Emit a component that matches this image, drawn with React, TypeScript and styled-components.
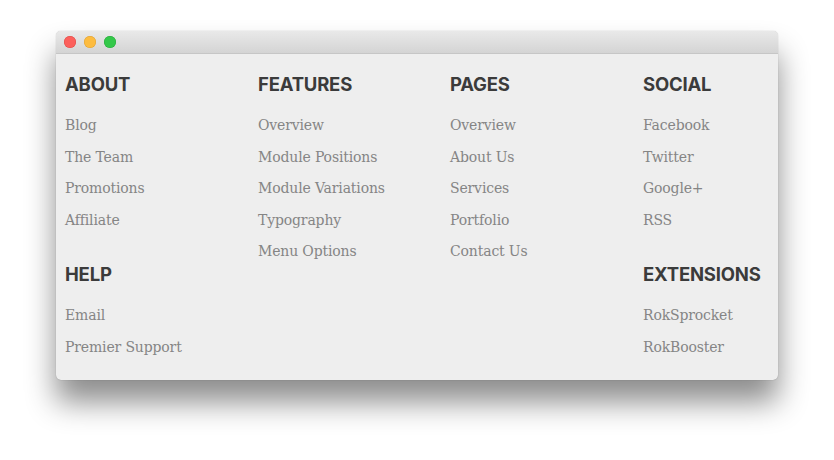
import React from 'react';
import styled, { createGlobalStyle } from 'styled-components';

const GlobalStyle = createGlobalStyle`
  html, body {
    margin: 0;
    padding: 0;
    background: #ffffff;
  }
`;

const Page = styled.div`
  width: 834px;
  height: 460px;
  padding: 31px 56px 0;
  box-sizing: border-box;
`;

const Window = styled.div`
  width: 722px;
  height: 349px;
  background-color: #eeeeee;
  border-radius: 5px;
  box-shadow: 0 22px 30px rgba(0, 0, 0, 0.45), 0 0 1px rgba(0, 0, 0, 0.35);
  overflow: hidden;
  display: flex;
  flex-direction: column;
`;

const TitleBar = styled.div`
  height: 22px;
  flex-shrink: 0;
  background: linear-gradient(#e9e9e9, #d4d4d4);
  border-bottom: 1px solid #c6c6c6;
  display: flex;
  align-items: center;
  gap: 8px;
  padding-left: 8px;
`;

const Light = styled.span<{ $color: string; $edge: string }>`
  width: 12px;
  height: 12px;
  border-radius: 50%;
  background-color: ${({ $color }) => $color};
  box-shadow: inset 0 0 0 0.5px ${({ $edge }) => $edge};
`;

const Grid = styled.div`
  display: grid;
  grid-template-columns: 193px 192px 193px 1fr;
  row-gap: 1px;
  padding: 19px 0 0 9px;
`;

const Column = styled.div`
  display: flex;
  flex-direction: column;
  align-items: flex-start;
  gap: 9.5px;
`;

const Heading = styled.h3`
  margin: 0 0 9.5px;
  font-family: Inter, "Liberation Sans", sans-serif;
  font-weight: 700;
  font-size: 18.5px;
  line-height: 22px;
  letter-spacing: -0.2px;
  color: #3b3b3b;
`;

const Link = styled.a`
  display: block;
  font-family: "DejaVu Serif", serif;
  font-size: 14px;
  line-height: 22px;
  color: #858585;
  text-decoration: none;
  letter-spacing: -0.15px;
`;

const sections = [
  { title: 'ABOUT', items: ['Blog', 'The Team', 'Promotions', 'Affiliate'] },
  {
    title: 'FEATURES',
    items: ['Overview', 'Module Positions', 'Module Variations', 'Typography', 'Menu Options'],
  },
  { title: 'PAGES', items: ['Overview', 'About Us', 'Services', 'Portfolio', 'Contact Us'] },
  { title: 'SOCIAL', items: ['Facebook', 'Twitter', 'Google+', 'RSS'] },
  { title: 'HELP', items: ['Email', 'Premier Support'] },
  null,
  null,
  { title: 'EXTENSIONS', items: ['RokSprocket', 'RokBooster'] },
];

const App: React.FC = () => {
  return (
    <>
      <GlobalStyle />
      <Page>
        <Window>
          <TitleBar>
            <Light $color="#fc605c" $edge="#de4a45" />
            <Light $color="#fdbc40" $edge="#dea033" />
            <Light $color="#34c84a" $edge="#27a83a" />
          </TitleBar>
          <Grid>
            {sections.map((section, i) =>
              section ? (
                <Column key={i}>
                  <Heading>{section.title}</Heading>
                  {section.items.map((item) => (
                    <Link key={item} href="#">
                      {item}
                    </Link>
                  ))}
                </Column>
              ) : (
                <Column key={i} />
              )
            )}
          </Grid>
        </Window>
      </Page>
    </>
  );
};

export default App;
